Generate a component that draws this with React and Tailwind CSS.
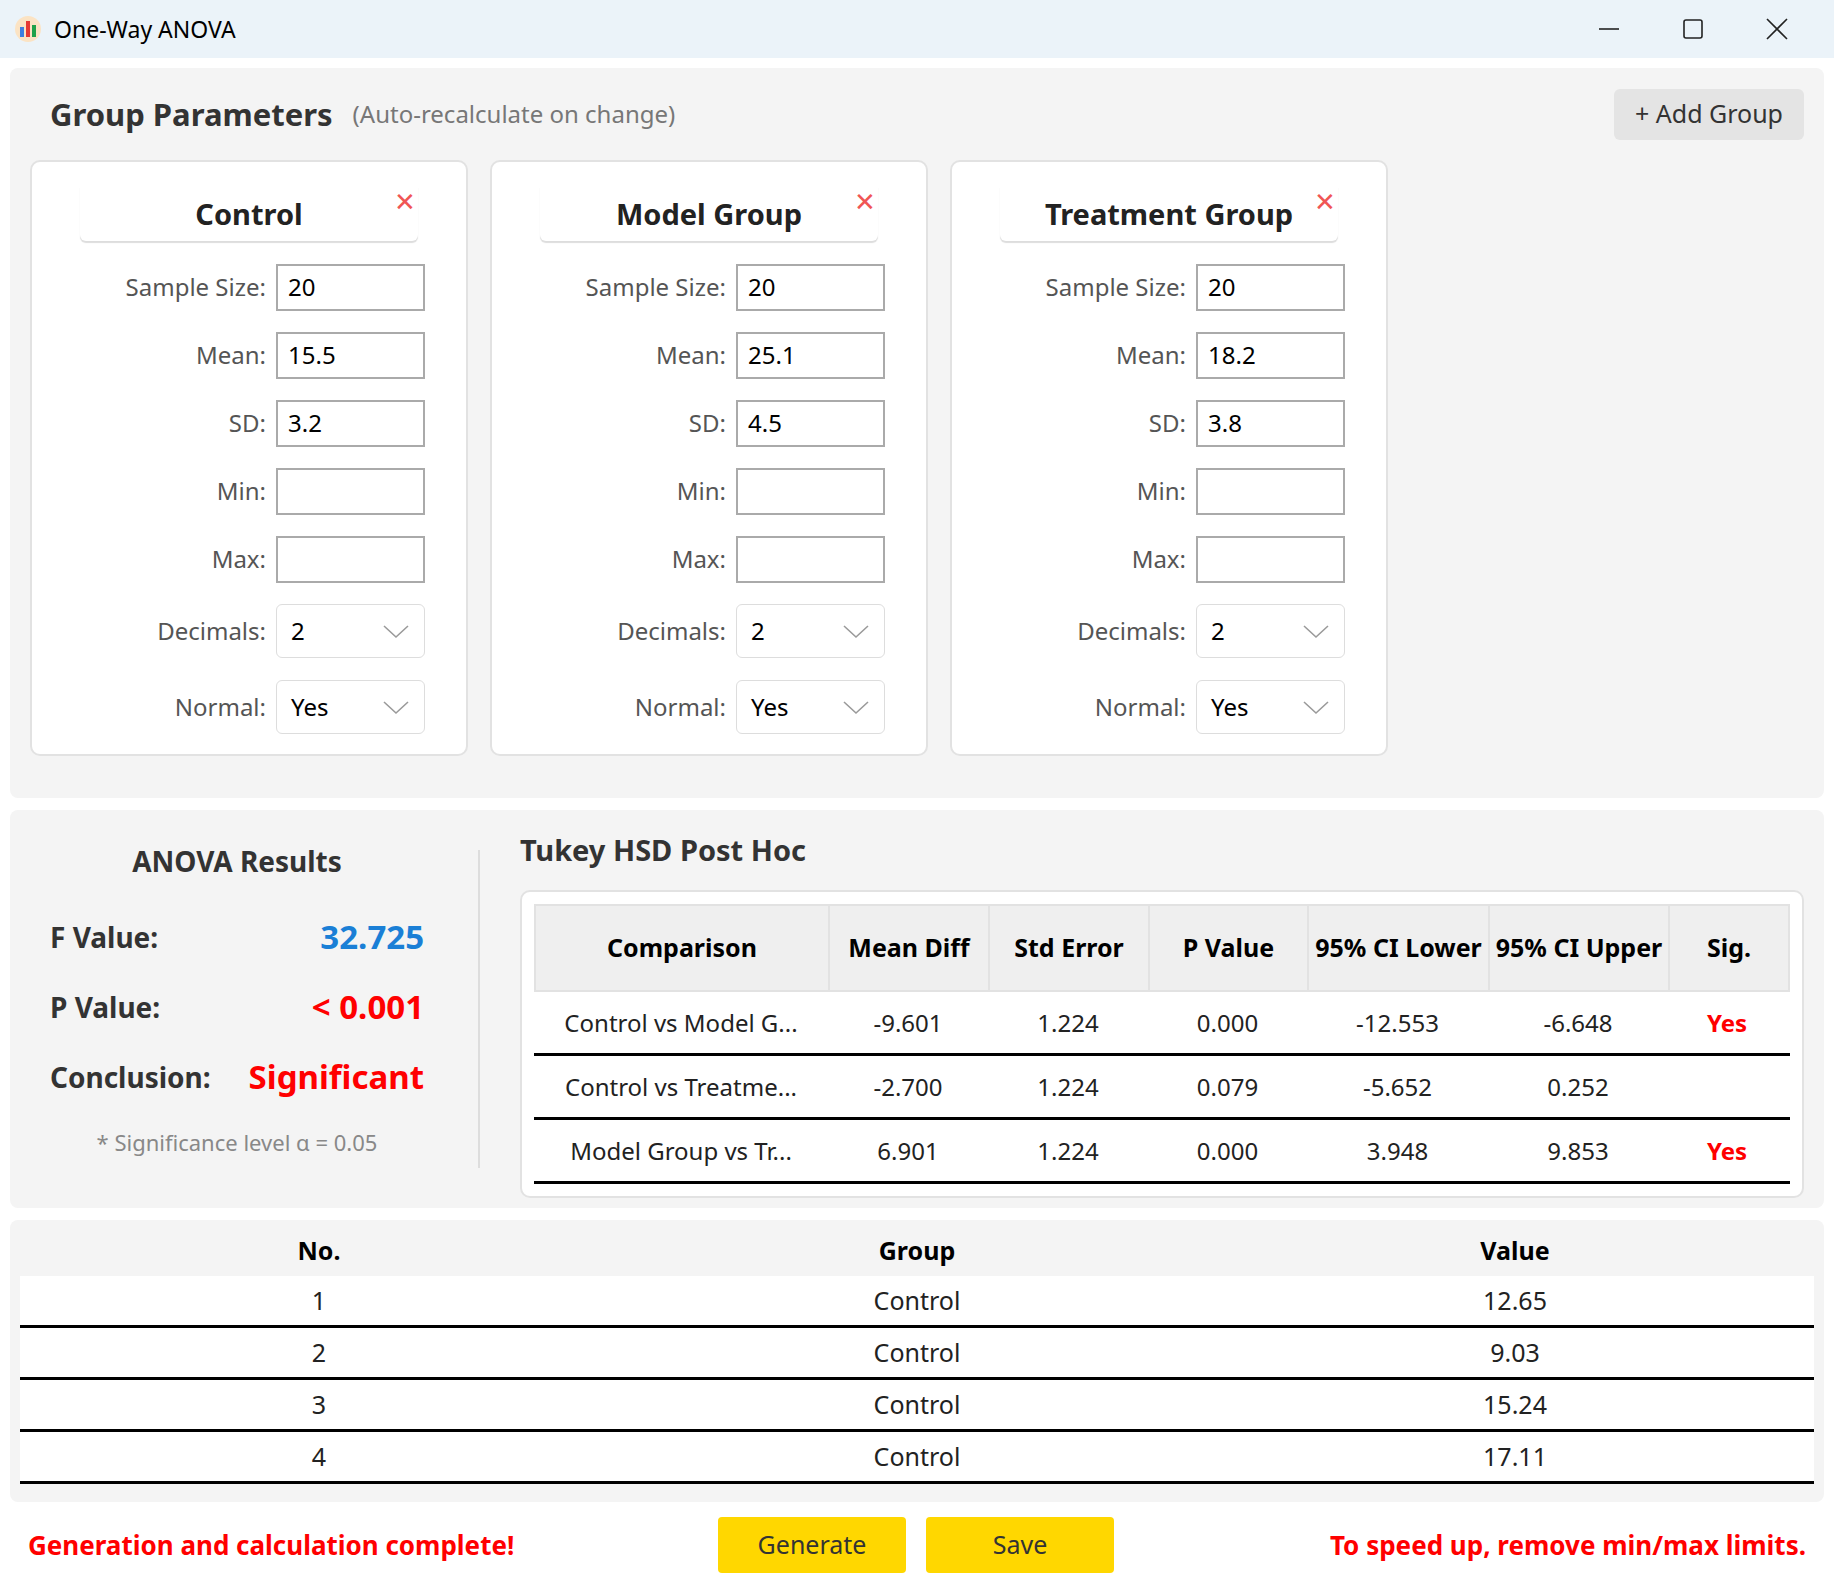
import React from "react";

const font = { fontFamily: '"Noto Sans", "Open Sans", sans-serif' };

const groups = [
  { name: "Control", n: "20", mean: "15.5", sd: "3.2" },
  { name: "Model Group", n: "20", mean: "25.1", sd: "4.5" },
  { name: "Treatment Group", n: "20", mean: "18.2", sd: "3.8" },
];

const tukey = [
  ["Control vs Model G...", "-9.601", "1.224", "0.000", "-12.553", "-6.648", "Yes"],
  ["Control vs Treatme...", "-2.700", "1.224", "0.079", "-5.652", "0.252", ""],
  ["Model Group vs Tr...", "6.901", "1.224", "0.000", "3.948", "9.853", "Yes"],
];

const rows = [
  ["1", "Control", "12.65"],
  ["2", "Control", "9.03"],
  ["3", "Control", "15.24"],
  ["4", "Control", "17.11"],
];

const Chevron = () => (
  <svg width="28" height="16" viewBox="0 0 28 16" fill="none" stroke="#9a9a9a" strokeWidth="1.6">
    <path d="M2 3l12 11L26 3" />
  </svg>
);

const Row = ({ label, children, h = "h-[68px]" }) => (
  <div className={`flex items-center ${h}`}>
    <span className="w-[244px] pr-[10px] text-right text-[24px] text-[#555]">{label}</span>
    {children}
  </div>
);

const Input = ({ v }) => (
  <div className="w-[149px] h-[47px] border-2 border-[#aaa] bg-white px-[10px] flex items-center text-[24px] text-black">{v}</div>
);

const Select = ({ v }) => (
  <div className="w-[149px] h-[54px] border border-[#ddd] rounded-[6px] bg-white px-[14px] flex items-center justify-between text-[24px] text-black">
    <span>{v}</span>
    <Chevron />
  </div>
);

const Card = ({ g }) => (
  <div className="w-[438px] h-[596px] bg-white border-2 border-[#e2e2e2] rounded-[10px] pt-[24px]">
    <div className="relative mx-[48px] h-[55px] flex items-center justify-center rounded-b-[6px] shadow-[0_2px_1px_#ddd]">
      <span className="text-[29px] font-bold text-[#222]">{g.name}</span>
      <span className="absolute right-[2px] top-[-4px] text-[26px] text-[#f05555]">✕</span>
    </div>
    <div className="pt-[12px]">
      <Row label="Sample Size:"><Input v={g.n} /></Row>
      <Row label="Mean:"><Input v={g.mean} /></Row>
      <Row label="SD:"><Input v={g.sd} /></Row>
      <Row label="Min:"><Input v="" /></Row>
      <Row label="Max:"><Input v="" /></Row>
      <Row label="Decimals:" h="h-[76px]"><Select v="2" /></Row>
      <Row label="Normal:" h="h-[76px]"><Select v="Yes" /></Row>
    </div>
  </div>
);

const tw = ["w-[294px]", "w-[160px]", "w-[160px]", "w-[159px]", "w-[181px]", "w-[180px]", "w-[118px]"];

export default function App() {
  return (
    <div style={font} className="w-[1834px] h-[1588px] bg-white flex flex-col text-[#222]">
      <div className="h-[58px] bg-[#ebf3f9] flex items-center px-[14px] shrink-0">
        <svg width="28" height="28" viewBox="0 0 28 28">
          <circle cx="14" cy="14" r="13" fill="#fbe3c4" />
          <rect x="6" y="12" width="4" height="10" fill="#3d7fe0" />
          <rect x="12" y="6" width="4" height="16" fill="#e53935" />
          <rect x="18" y="10" width="4" height="12" fill="#1fa14a" />
        </svg>
        <span className="ml-[12px] text-[23px] text-black">One-Way ANOVA</span>
        <div className="ml-auto flex items-center gap-[62px] pr-[32px]">
          <svg width="22" height="22" viewBox="0 0 22 22" stroke="#222" strokeWidth="1.6"><path d="M1 11h20" /></svg>
          <svg width="22" height="22" viewBox="0 0 22 22" fill="none" stroke="#222" strokeWidth="1.6"><rect x="2" y="2" width="18" height="18" rx="2" /></svg>
          <svg width="22" height="22" viewBox="0 0 22 22" stroke="#222" strokeWidth="1.6"><path d="M1 1l20 20M21 1L1 21" /></svg>
        </div>
      </div>

      <div className="mx-[10px] mt-[10px] h-[730px] bg-[#f4f4f4] rounded-[8px] px-[20px] pt-[20px]">
        <div className="flex items-center h-[52px]">
          <span className="ml-[20px] text-[31px] font-bold text-[#333]">Group Parameters</span>
          <span className="ml-[20px] text-[24px] text-[#777]">(Auto-recalculate on change)</span>
          <div className="ml-auto w-[190px] h-[51px] bg-[#e4e4e4] rounded-[6px] flex items-center justify-center text-[25px] text-[#333]">+ Add Group</div>
        </div>
        <div className="flex gap-[22px] mt-[20px]">
          {groups.map((g) => <Card key={g.name} g={g} />)}
        </div>
      </div>

      <div className="mx-[10px] mt-[12px] h-[398px] bg-[#f4f4f4] rounded-[8px] flex">
        <div className="w-[470px] pl-[40px] pr-[54px] pt-[30px]">
          <div className="text-center text-[28px] font-bold text-[#333] h-[50px]">ANOVA Results</div>
          <div className="flex justify-between items-center h-[70px] mt-[12px] text-[28px] font-bold">
            <span className="text-[#333]">F Value:</span><span className="text-[33px] text-[#1a7fd6]">32.725</span>
          </div>
          <div className="flex justify-between items-center h-[70px] text-[28px] font-bold">
            <span className="text-[#333]">P Value:</span><span className="text-[33px] text-[#ff0000]">&lt; 0.001</span>
          </div>
          <div className="flex justify-between items-center h-[70px] text-[28px] font-bold">
            <span className="text-[#333]">Conclusion:</span><span className="text-[33px] text-[#ff0000]">Significant</span>
          </div>
          <div className="text-center text-[22px] text-[#888] mt-[14px]">* Significance level α = 0.05</div>
        </div>
        <div className="w-[2px] bg-[#ddd] my-[40px]" />
        <div className="flex-1 pl-[40px] pr-[20px] pt-[18px]">
          <div className="text-[29px] font-bold text-[#333] h-[50px]">Tukey HSD Post Hoc</div>
          <div className="mt-[12px] bg-white border-2 border-[#e2e2e2] rounded-[10px] px-[12px] pt-[12px] h-[308px]">
            <div className="flex h-[88px] bg-[#efefef] border-2 border-[#e2e2e2]">
              {["Comparison", "Mean Diff", "Std Error", "P Value", "95% CI Lower", "95% CI Upper", "Sig."].map((h, i) => (
                <div key={h} className={`${tw[i]} px-[10px] flex items-center justify-center overflow-hidden whitespace-nowrap text-[25px] font-bold text-black ${i < 6 ? "border-r-2 border-[#e2e2e2]" : ""}`}>{h}</div>
              ))}
            </div>
            {tukey.map((r) => (
              <div key={r[0]} className="flex h-[64px] border-b-[3px] border-black">
                {r.map((c, i) => (
                  <div key={i} className={`${tw[i]} flex items-center justify-center text-[24px] ${i === 6 ? "font-bold text-[#ff0000]" : "text-[#222]"}`}>{c}</div>
                ))}
              </div>
            ))}
          </div>
        </div>
      </div>

      <div className="mx-[10px] mt-[12px] h-[282px] bg-[#f4f4f4] rounded-[8px] px-[10px] pt-[6px] overflow-hidden">
        <div className="grid grid-cols-3 h-[50px] items-center text-[25px] font-bold text-black text-center">
          <span>No.</span><span>Group</span><span>Value</span>
        </div>
        {rows.map((r) => (
          <div key={r[0]} className="grid grid-cols-3 h-[52px] items-center bg-white border-b-[3px] border-black text-[25px] text-[#222] text-center">
            {r.map((c, i) => <span key={i}>{c}</span>)}
          </div>
        ))}
      </div>

      <div className="flex-1 flex items-center px-[28px]">
        <span className="text-[26px] font-bold text-[#ff0000] w-[680px]">Generation and calculation complete!</span>
        <div className="flex gap-[20px] ml-[10px]">
          <div className="w-[188px] h-[56px] bg-[#ffd700] rounded-[4px] flex items-center justify-center text-[25px] text-[#333]">Generate</div>
          <div className="w-[188px] h-[56px] bg-[#ffd700] rounded-[4px] flex items-center justify-center text-[25px] text-[#333]">Save</div>
        </div>
        <span className="ml-auto text-[26px] font-bold text-[#ff0000]">To speed up, remove min/max limits.</span>
      </div>
    </div>
  );
}
